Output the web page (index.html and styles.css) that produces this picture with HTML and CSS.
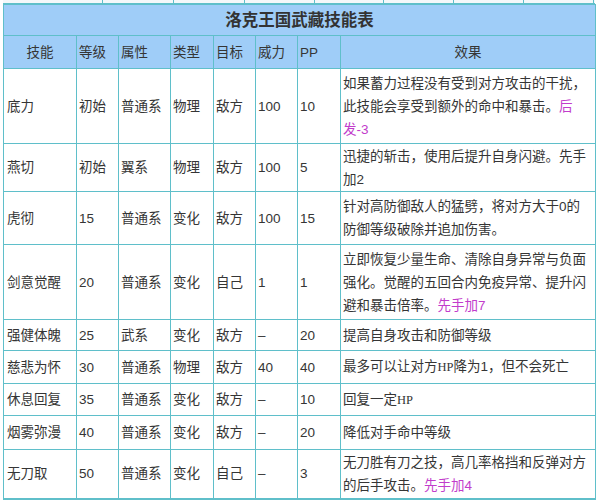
FILE: index.html
```html
<!DOCTYPE html>
<html lang="zh">
<head>
<meta charset="utf-8">
<title>洛克王国武藏技能表</title>
<link rel="stylesheet" href="styles.css">
</head>
<body>
<div class="prev">
  <span class="p1"></span><span class="p2"></span><span class="p3"></span><span class="p4"></span><span class="p5"></span><span class="p6"></span><span class="p7"></span><span class="p8"></span>
</div>
<table class="skills">
  <colgroup>
    <col class="c1"><col class="c2"><col class="c3"><col class="c4"><col class="c5"><col class="c6"><col class="c7"><col class="c8">
  </colgroup>
  <tr class="title-row"><th colspan="8" class="title">洛克王国武藏技能表</th></tr>
  <tr class="head-row">
    <th class="center">技能</th><th>等级</th><th>属性</th><th>类型</th><th>目标</th><th>威力</th><th>PP</th><th class="center">效果</th>
  </tr>
  <tr class="r75">
    <td>底力</td><td>初始</td><td>普通系</td><td>物理</td><td>敌方</td><td>100</td><td>10</td>
    <td class="eff">如果蓄力过程没有受到对方攻击的干扰，<br>此技能会享受到额外的命中和暴击。<span class="pink">后<br>发-3</span></td>
  </tr>
  <tr class="r47">
    <td>燕切</td><td>初始</td><td>翼系</td><td>物理</td><td>敌方</td><td>100</td><td>5</td>
    <td class="eff">迅捷的斩击，使用后提升自身闪避。先手<br>加2</td>
  </tr>
  <tr class="r53">
    <td>虎彻</td><td>15</td><td>普通系</td><td>变化</td><td>敌方</td><td>100</td><td>15</td>
    <td class="eff">针对高防御敌人的猛劈，将对方大于0的<br>防御等级破除并追加伤害。</td>
  </tr>
  <tr class="r75">
    <td>剑意觉醒</td><td>20</td><td>普通系</td><td>变化</td><td>自己</td><td>1</td><td>1</td>
    <td class="eff">立即恢复少量生命、清除自身异常与负面<br>强化。觉醒的五回合内免疫异常、提升闪<br>避和暴击倍率。<span class="pink">先手加7</span></td>
  </tr>
  <tr class="r31">
    <td>强健体魄</td><td>25</td><td>武系</td><td>变化</td><td>敌方</td><td>–</td><td>20</td>
    <td class="eff">提高自身攻击和防御等级</td>
  </tr>
  <tr class="r33">
    <td>慈悲为怀</td><td>30</td><td>普通系</td><td>物理</td><td>敌方</td><td>40</td><td>40</td>
    <td class="eff">最多可以让对方<span class="serif">HP</span>降为1，但不会死亡</td>
  </tr>
  <tr class="r32">
    <td>休息回复</td><td>35</td><td>普通系</td><td>变化</td><td>敌方</td><td>–</td><td>10</td>
    <td class="eff">回复一定<span class="serif">HP</span></td>
  </tr>
  <tr class="r34">
    <td>烟雾弥漫</td><td>40</td><td>普通系</td><td>变化</td><td>敌方</td><td>–</td><td>20</td>
    <td class="eff">降低对手命中等级</td>
  </tr>
  <tr class="r49">
    <td>无刀取</td><td>50</td><td>普通系</td><td>变化</td><td>自己</td><td>–</td><td>3</td>
    <td class="eff">无刀胜有刀之技，高几率格挡和反弹对方<br>的后手攻击。<span class="pink">先手加4</span></td>
  </tr>
</table>
<div class="next"><span class="n1"></span></div>
</body>
</html>
```
FILE: styles.css
```css
html, body {
  margin: 0;
  padding: 0;
  background: #ffffff;
}
body {
  width: 599px;
  height: 500px;
  overflow: hidden;
  font-family: "Liberation Sans", "Noto Sans CJK SC", sans-serif;
  color: #353535;
}
.prev {
  display: flex;
  height: 3px;
  margin-left: 3px;
  width: 592px;
  border-bottom: 1px solid #5fbfca;
  background: #f4f8fa;
}
.prev span {
  height: 3px;
  border-right: 1px solid #5fbfca;
}
.p1 { width: 99px; }
.p2 { width: 70px; }
.p3 { width: 70px; }
.p4 { width: 69px; }
.p5 { width: 68px; }
.p6 { width: 69px; }
.p7 { width: 69px; }
.p8 { width: 69px; }

.skills {
  border-collapse: collapse;
  table-layout: fixed;
  width: 592px;
  margin-left: 3px;
  font-size: 13.5px;
  line-height: 23px;
}
.c1 { width: 73px; }
.c2 { width: 42px; }
.c3 { width: 52px; }
.c4 { width: 43px; }
.c5 { width: 42px; }
.c6 { width: 42px; }
.c7 { width: 43px; }
.c8 { width: 255px; }

.skills th,
.skills td {
  border: 1px solid #5fbfca;
  padding: 0 0 0 2px;
  text-align: left;
  vertical-align: middle;
  font-weight: normal;
  white-space: nowrap;
  overflow: visible;
}
.skills td:first-child { padding-left: 3px; }
.skills th { background: #9fcdf8; }
.skills th.center { text-align: center; padding: 0; }
.skills th.title {
  text-align: center;
  font-weight: bold;
  font-size: 16.5px;
  padding: 0;
  color: #333;
}
.skills td.eff { padding-left: 2px; }
.title-row { height: 31px; }
.head-row { height: 33px; }
.r75 { height: 75px; }
.r47 { height: 48px; }
.r53 { height: 53px; }
.r31 { height: 31px; }
.r33 { height: 33px; }
.r32 { height: 32px; }
.r34 { height: 34px; }
.r49 { height: 49px; }
.skills tr:last-child td { border-bottom: 2px solid #5fbfca; }
.pink { color: #c23ccb; }
.serif { font-family: "Liberation Serif", serif; font-size: 12.5px; }

.next { display: flex; height: 3px; }
.n1 { width: 110px; background: #a9d4f4; }
```
